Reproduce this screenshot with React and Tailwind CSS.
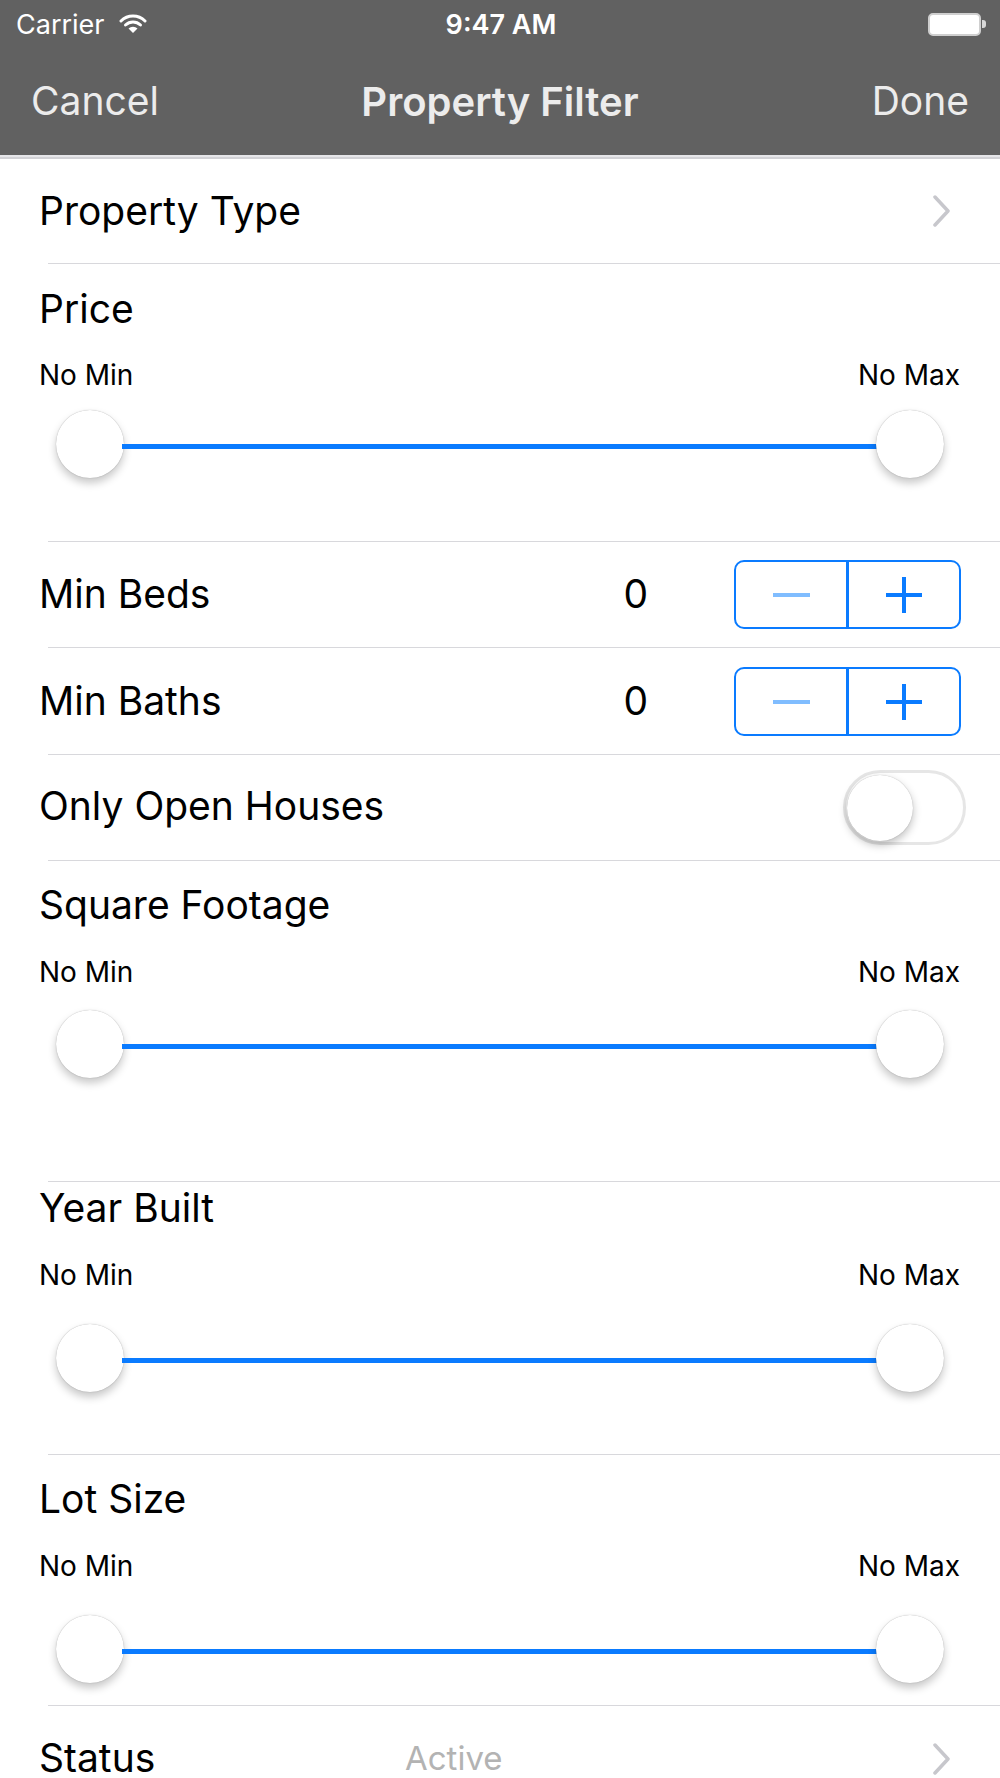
import React from "react";

const FONT = { fontFamily: "Inter, 'Noto Sans', 'Liberation Sans', sans-serif" };

function Chevron() {
  return (
    <svg width="22" height="32" viewBox="0 0 22 32" className="shrink-0">
      <polyline points="4,2 17,16 4,30" fill="none" stroke="#c7c7cc" strokeWidth="3.5" strokeLinecap="round" strokeLinejoin="round" />
    </svg>
  );
}

function Sep() {
  return <div className="ml-[48px] h-px bg-[#d8d8dc]" />;
}

function Thumb() {
  return (
    <div className="w-[68px] h-[68px] rounded-full bg-white shrink-0 shadow-[0_5px_8px_rgba(0,0,0,0.22),0_0_1px_rgba(0,0,0,0.35)]" />
  );
}

function SliderCell({ title, h, pt, g1, g2 }) {
  return (
    <div className="flex flex-col" style={{ height: h }}>
      <div style={{ height: pt }} />
      <div className="pl-[39px] text-[39px] leading-[48px] text-black">{title}</div>
      <div style={{ height: g1 }} />
      <div className="flex justify-between pl-[39px] pr-[40px] text-[28px] leading-[32px] text-black">
        <span>No Min</span>
        <span>No Max</span>
      </div>
      <div style={{ height: g2 }} />
      <div className="flex items-center mx-[56px]">
        <Thumb />
        <div className="flex-1 h-[5px] mt-[5px] bg-[#0a7bff] -mx-[2px]" />
        <Thumb />
      </div>
    </div>
  );
}

function Stepper() {
  return (
    <div className="flex w-[227px] h-[69px] rounded-[10px] border-[2.5px] border-[#0a7bff] shrink-0">
      <div className="flex-1 flex items-center justify-center">
        <div className="w-[37px] h-[4px] bg-[#80bdff]" />
      </div>
      <div className="w-[2.5px] bg-[#0a7bff]" />
      <div className="flex-1 flex items-center justify-center">
        <div className="relative w-[36px] h-[36px] flex items-center justify-center">
          <div className="w-[36px] h-[4px] bg-[#0a7bff]" />
          <div className="absolute left-[16px] top-0 w-[4px] h-[36px] bg-[#0a7bff]" />
        </div>
      </div>
    </div>
  );
}

function StepRow({ label }) {
  return (
    <div className="flex items-center h-[105px] pl-[39px] pr-[39px]">
      <div className="flex-1 text-[39px] text-black -mt-[1px]">{label}</div>
      <span className="text-[39px] text-black -mt-[1px]">0</span>
      <div className="ml-[86px]">
        <Stepper />
      </div>
    </div>
  );
}

function Wifi() {
  return (
    <svg width="28" height="20" viewBox="0 0 28 20">
      <path d="M2 7 A17 17 0 0 1 26 7" fill="none" stroke="white" strokeWidth="3" strokeLinecap="round" />
      <path d="M6.5 11 A11 11 0 0 1 21.5 11" fill="none" stroke="white" strokeWidth="3" strokeLinecap="round" />
      <path d="M14 19 L9.5 14.5 A6.5 6.5 0 0 1 18.5 14.5 Z" fill="white" />
    </svg>
  );
}

export default function App() {
  return (
    <div className="w-[1000px] min-h-[1778px] bg-white overflow-hidden" style={FONT}>
      {/* status bar */}
      <div className="h-[48px] bg-[#616161] flex items-center relative px-[16px] text-white">
        <div className="flex items-center gap-[14px]">
          <span className="text-[27px] leading-none">Carrier</span>
          <Wifi />
        </div>
        <div className="absolute left-0 right-0 top-0 h-[48px] flex items-center justify-center pointer-events-none">
          <span className="text-[27px] font-semibold leading-none ml-[2px]">9:47 AM</span>
        </div>
        <div className="ml-auto flex items-center mr-[-2px]">
          <div className="w-[53px] h-[23px] rounded-[5px] border-[2px] border-[#cfcfcf] bg-white" />
          <div className="w-[4px] h-[8px] rounded-r-[3px] bg-[#d8d8d8] ml-[1px]" />
        </div>
      </div>
      {/* nav bar */}
      <div className="h-[107px] bg-[#616161] grid grid-cols-[1fr_auto_1fr] items-center pl-[31px] pr-[31px] text-[#ececec]">
        <span className="text-[39px] justify-self-start">Cancel</span>
        <span className="text-[40px] font-semibold">Property Filter</span>
        <span className="text-[39px] justify-self-end">Done</span>
      </div>
      <div className="h-[2px] bg-[#e6e6e9]" />
      <div className="h-[2px] bg-[#d2d2d6]" />

      {/* Property Type */}
      <div className="flex items-center h-[104px] pl-[39px] pr-[47px]">
        <div className="flex-1 text-[39px] text-black">Property Type</div>
        <Chevron />
      </div>
      <Sep />

      <SliderCell title="Price" h={277} pt={21} g1={26} g2={19} />
      <Sep />

      <StepRow label="Min Beds" />
      <Sep />
      <div className="h-px" />
      <StepRow label="Min Baths" />
      <Sep />

      <div className="flex items-center h-[105px] pl-[39px] pr-[34px]">
        <div className="flex-1 text-[39px] text-black -mt-[2px]">Only Open Houses</div>
        <div className="w-[123px] h-[75px] rounded-full border-[3px] border-[#e6e6e6] bg-white p-[1px] flex items-center">
          <div className="w-[66px] h-[66px] rounded-full bg-white shadow-[0_4px_8px_rgba(0,0,0,0.25),0_0_1px_rgba(0,0,0,0.3)]" />
        </div>
      </div>
      <Sep />

      <SliderCell title="Square Footage" h={320} pt={20} g1={27} g2={22} />
      <Sep />

      <SliderCell title="Year Built" h={272} pt={2} g1={27} g2={33} />
      <Sep />

      <SliderCell title="Lot Size" h={250} pt={20} g1={27} g2={33} />
      <Sep />

      <div className="flex items-center h-[106px] pl-[39px] pr-[47px]">
        <div className="w-[366px] text-[39px] text-black -mt-[1px]">Status</div>
        <div className="flex-1 text-[33px] text-[#b3b3b3]">Active</div>
        <Chevron />
      </div>
    </div>
  );
}
